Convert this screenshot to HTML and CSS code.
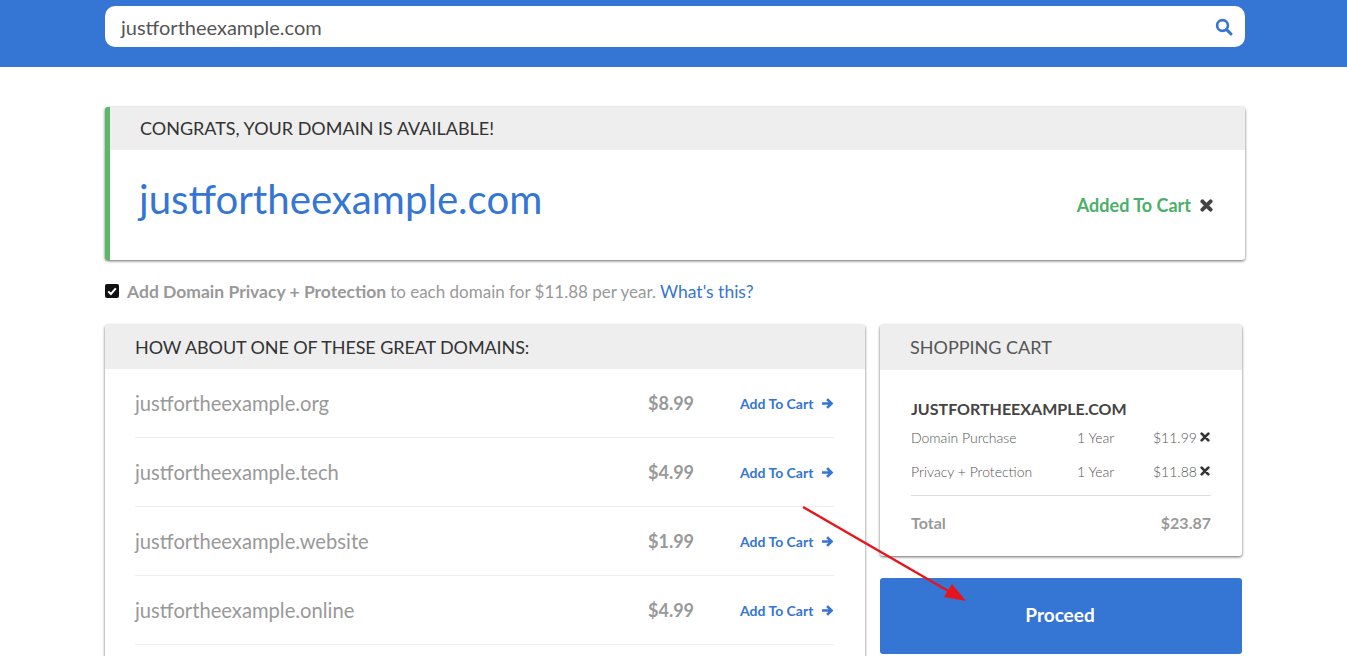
FILE: index.html
```html
<!DOCTYPE html>
<html lang="en">
<head>
  <meta charset="UTF-8" />
  <title>Domain Search</title>
  <link rel="stylesheet" href="styles.css">
</head>
<body>

  <header class="topbar">
    <div class="wrap">
      <div class="search">
        <span class="search-text">justfortheexample.com</span>
        <svg class="search-icon" viewBox="0 0 18 18" width="18" height="18">
          <circle cx="7.5" cy="7.5" r="5.4" fill="none" stroke="#3575d3" stroke-width="2.6"/>
          <path d="M11.6 11.6 L16 16" stroke="#3575d3" stroke-width="3" stroke-linecap="round"/>
        </svg>
      </div>
    </div>
  </header>

  <main class="wrap">
    <section class="card card-available">
      <div class="card-head head-available">CONGRATS, YOUR DOMAIN IS AVAILABLE!</div>
      <div class="available-body">
        <a class="available-name">justfortheexample.com</a>
        <div class="added">
          <span>Added To Cart</span>
          <svg class="x-icon" viewBox="0 0 12 12" width="13" height="13"><path d="M2.2 2.2 L9.8 9.8 M9.8 2.2 L2.2 9.8" stroke="#444" stroke-width="3.6" stroke-linecap="round"/></svg>
        </div>
      </div>
    </section>

    <div class="privacy">
      <span class="checkbox">
        <svg viewBox="0 0 14 14" width="14" height="14"><path d="M3.2 7.4 L5.9 10 L10.8 4.4" fill="none" stroke="#fff" stroke-width="2"/></svg>
      </span>
      <b>Add Domain Privacy + Protection</b><span class="privacy-note">to each domain for $11.88 per year.</span><a>What's this?</a>
    </div>

    <div class="columns">
      <section class="card suggestions">
        <div class="card-head head-suggestions">HOW ABOUT ONE OF THESE GREAT DOMAINS:</div>
        <ul class="domain-list">
          <li class="domain-row">
            <span class="domain-name">justfortheexample.org</span>
            <span class="domain-price">$8.99</span>
            <a class="add-link">Add To Cart <svg viewBox="0 0 12 12" width="13" height="13"><path d="M1 6 H10 M5.8 1.8 L10 6 L5.8 10.2" fill="none" stroke="#3575d3" stroke-width="2.6"/></svg></a>
          </li>
          <li class="domain-row">
            <span class="domain-name">justfortheexample.tech</span>
            <span class="domain-price">$4.99</span>
            <a class="add-link">Add To Cart <svg viewBox="0 0 12 12" width="13" height="13"><path d="M1 6 H10 M5.8 1.8 L10 6 L5.8 10.2" fill="none" stroke="#3575d3" stroke-width="2.6"/></svg></a>
          </li>
          <li class="domain-row">
            <span class="domain-name">justfortheexample.website</span>
            <span class="domain-price">$1.99</span>
            <a class="add-link">Add To Cart <svg viewBox="0 0 12 12" width="13" height="13"><path d="M1 6 H10 M5.8 1.8 L10 6 L5.8 10.2" fill="none" stroke="#3575d3" stroke-width="2.6"/></svg></a>
          </li>
          <li class="domain-row">
            <span class="domain-name">justfortheexample.online</span>
            <span class="domain-price">$4.99</span>
            <a class="add-link">Add To Cart <svg viewBox="0 0 12 12" width="13" height="13"><path d="M1 6 H10 M5.8 1.8 L10 6 L5.8 10.2" fill="none" stroke="#3575d3" stroke-width="2.6"/></svg></a>
          </li>
        </ul>
      </section>

      <aside class="side">
        <section class="card cart">
          <div class="card-head head-cart">SHOPPING CART</div>
          <div class="cart-body">
            <div class="cart-domain">JUSTFORTHEEXAMPLE.COM</div>
            <div class="cart-row">
              <span class="cart-item">Domain Purchase</span>
              <span class="cart-term">1 Year</span>
              <span class="cart-price">$11.99</span>
              <svg viewBox="0 0 12 12" width="10" height="10"><path d="M2 2 L10 10 M10 2 L2 10" stroke="#333" stroke-width="3.2" stroke-linecap="round"/></svg>
            </div>
            <div class="cart-row">
              <span class="cart-item">Privacy + Protection</span>
              <span class="cart-term">1 Year</span>
              <span class="cart-price">$11.88</span>
              <svg viewBox="0 0 12 12" width="10" height="10"><path d="M2 2 L10 10 M10 2 L2 10" stroke="#333" stroke-width="3.2" stroke-linecap="round"/></svg>
            </div>
            <div class="cart-total">
              <span>Total</span>
              <span>$23.87</span>
            </div>
          </div>
        </section>
        <button class="proceed">Proceed</button>
      </aside>
    </div>
  </main>

  <!-- annotation arrow drawn over the page -->
  <svg class="annotation" viewBox="0 0 1347 656" width="1347" height="656">
    <path d="M803 507 L950 592" stroke="#e8141c" stroke-width="2.4"/>
    <path d="M966 601 L944 597 L952 584 Z" fill="#e8141c"/>
  </svg>

</body>
</html>
```

FILE: styles.css
```css
* {
  box-sizing: border-box;
}

html,
body {
  height: 656px;
  overflow: hidden;
}

body {
  margin: 0;
  background: #fff;
  font-family: Lato, "Open Sans", sans-serif;
  color: #333;
}

a {
  color: #3575d3;
  text-decoration: none;
}

.wrap {
  width: 1140px;
  margin-left: 105px;
}

.topbar {
  height: 67px;
  padding-top: 6px;
  background: #3575d3;
}

.search {
  display: flex;
  align-items: center;
  justify-content: space-between;
  height: 41px;
  padding: 0 12px 0 16px;
  background: #fff;
  border-radius: 10px;
}

.search-text {
  margin-top: 1px;
  font-size: 20px;
  color: #555;
}

.card {
  background: #fff;
  border-radius: 3px;
  box-shadow: 0 1px 3px rgba(0, 0, 0, 0.6);
}

.card-head {
  height: 44px;
  padding-left: 30px;
  background: #eee;
  font-size: 18px;
  line-height: 44px;
  color: #333;
  white-space: nowrap;
}

.card-available {
  height: 153px;
  margin-top: 40px;
  border-left: 5px solid #5cb868;
}

.head-available {
  height: 43px;
  line-height: 43px;
}

.head-suggestions {
  letter-spacing: -0.1px;
}

.available-body {
  display: flex;
  align-items: center;
  justify-content: space-between;
  height: 110px;
  padding: 0 31px 0 29px;
}

.available-name {
  margin-top: -14px;
  font-size: 40.2px;
  color: #3575d3;
}

.added {
  display: flex;
  align-items: center;
  gap: 9px;
  font-size: 18px;
  font-weight: 700;
  color: #4caf6a;
}

.x-icon {
  margin-right: 1px;
}

.privacy {
  display: flex;
  align-items: center;
  height: 20px;
  margin-top: 21px;
  font-size: 17.5px;
  color: #999;
  white-space: nowrap;
}

.privacy a {
  color: #3575d3;
}

.privacy-note {
  margin: 0 4px;
  font-size: 17px;
}

.checkbox {
  display: flex;
  width: 14px;
  height: 14px;
  margin-right: 8px;
  background: #111;
  border-radius: 2px;
}

.columns {
  display: flex;
  align-items: flex-start;
  gap: 15px;
  margin-top: 24px;
}

.suggestions {
  width: 760px;
  height: 400px;
}

.domain-list {
  margin: 0;
  padding: 0 31px 0 30px;
  list-style: none;
}

.domain-row {
  display: flex;
  align-items: center;
  height: 69px;
  border-bottom: 1px solid #eee;
}

.domain-name {
  flex: 1;
  font-size: 20.2px;
  color: #999;
}

.domain-price {
  width: 92px;
  font-size: 18px;
  font-weight: 700;
  color: #999;
}

.add-link {
  display: flex;
  align-items: center;
  gap: 8px;
  width: 94px;
  font-size: 14px;
  font-weight: 700;
  white-space: nowrap;
}

.side {
  width: 362px;
}

.head-cart {
  height: 45px;
  line-height: 45px;
  color: #555;
}

.cart {
  height: 231px;
}

.cart-body {
  padding: 27px 31px 0 31px;
}

.cart-domain {
  height: 23px;
  font-size: 16px;
  font-weight: 700;
  line-height: 24px;
  color: #444;
}

.cart-row {
  display: flex;
  align-items: center;
  height: 34px;
  font-size: 14px;
  font-weight: 300;
  color: #555;
}

.cart-row svg {
  margin-left: 4px;
}

.cart-item {
  width: 166px;
}

.cart-term {
  width: 76px;
}

.cart-price {
  width: 43px;
}

.cart-total {
  display: flex;
  justify-content: space-between;
  margin-top: 7px;
  padding-top: 17px;
  border-top: 1px solid #ddd;
  font-size: 16px;
  font-weight: 700;
  color: #999;
}

.proceed {
  display: block;
  width: 100%;
  height: 76px;
  margin-top: 22px;
  padding: 0 2px 3px 0;
  background: #3575d3;
  border: none;
  border-radius: 3px;
  font-family: inherit;
  font-size: 19px;
  font-weight: 700;
  color: #fff;
}

.annotation {
  position: absolute;
  left: 0;
  top: 0;
  pointer-events: none;
}
```
